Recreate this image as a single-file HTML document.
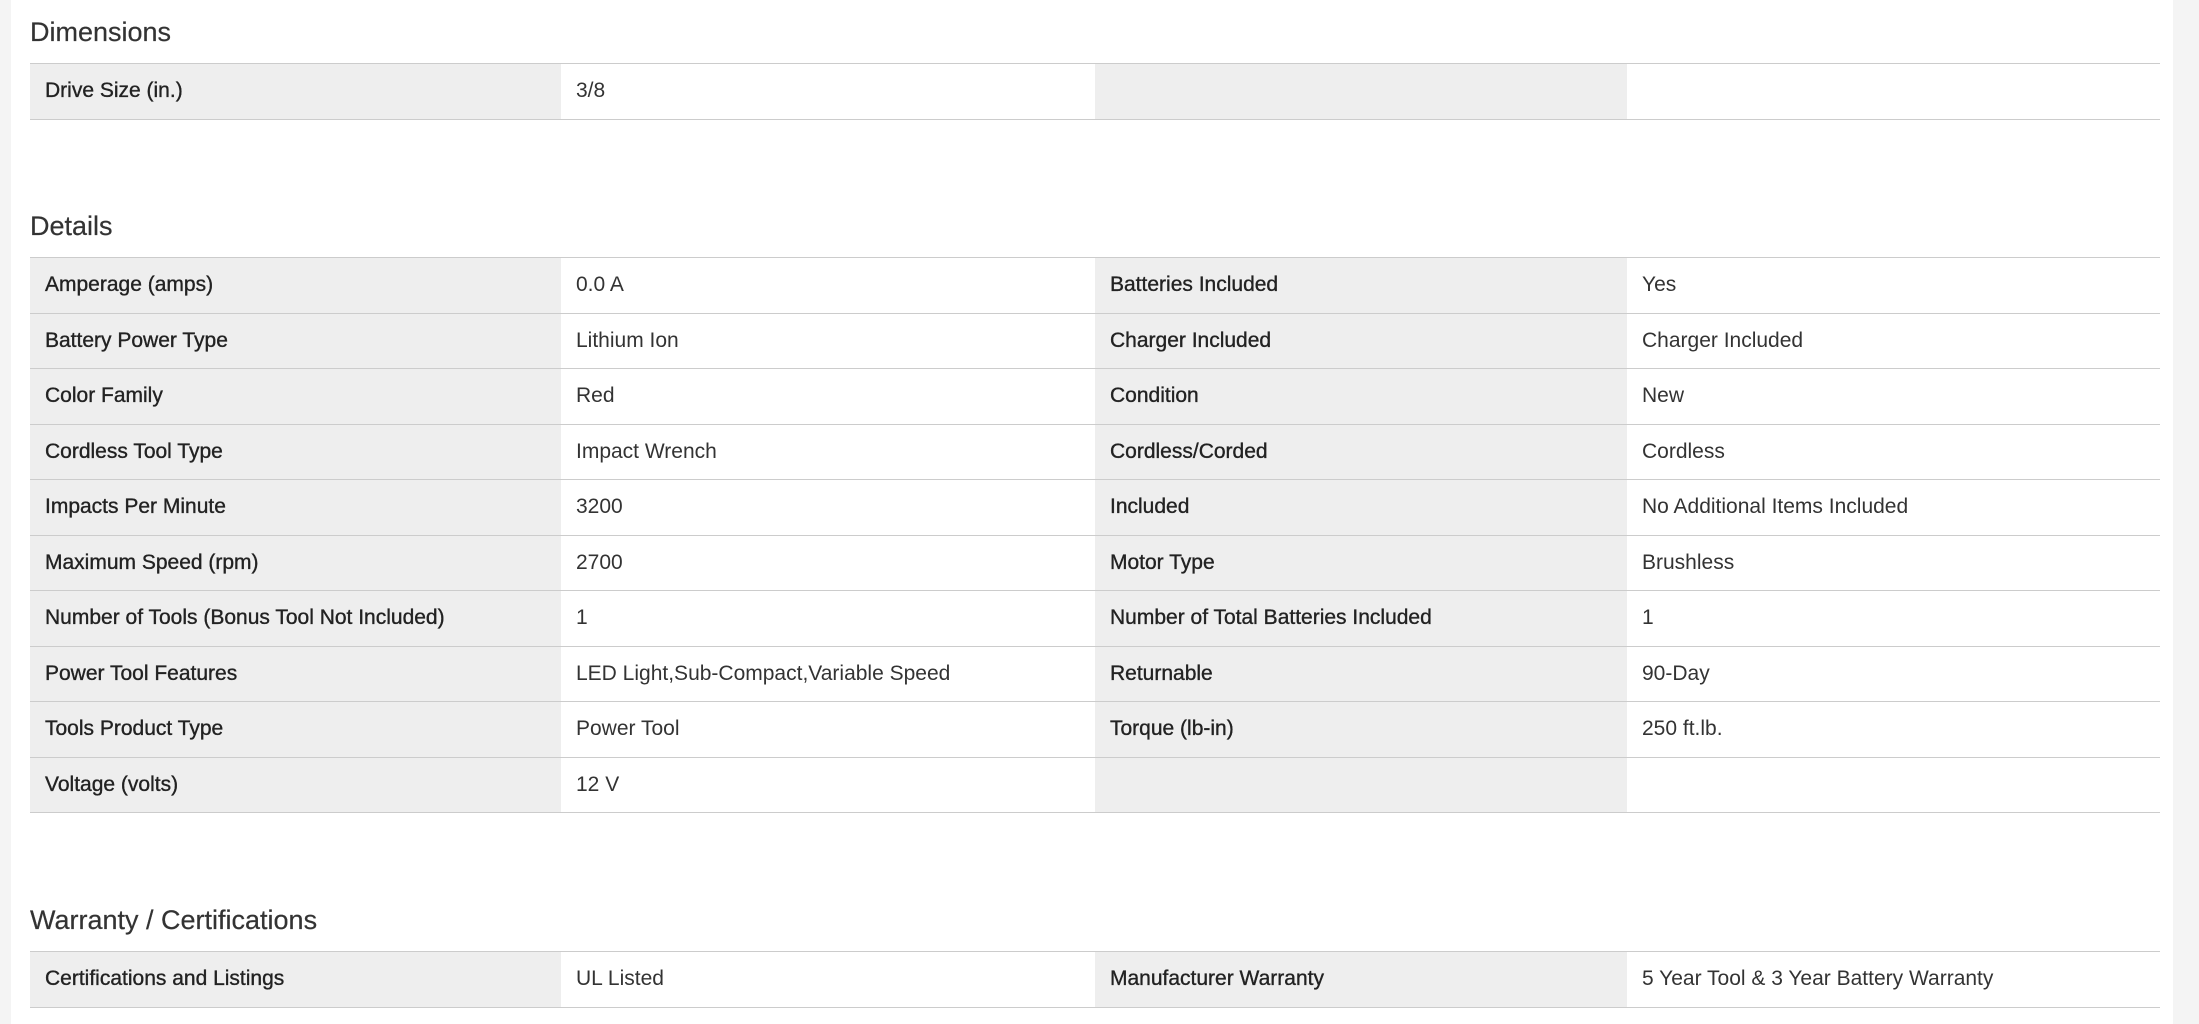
<!DOCTYPE html>
<html><head><meta charset="utf-8"><style>
html,body{margin:0;padding:0;background:#fff;width:2199px;height:1024px;overflow:hidden;font-family:"Liberation Sans",Arial,sans-serif;color:#333}
.lstrip{position:absolute;left:0;top:0;width:11px;height:1024px;background:#f4f4f4}
.rstrip{position:absolute;left:2173px;top:0;width:26px;height:1024px;background:#f4f4f4}
h2{position:absolute;left:30px;margin:0;font-size:27px;font-weight:normal;color:#333;line-height:30px;-webkit-text-stroke:0.2px #333}
table{position:absolute;left:30px;width:2130px;border-collapse:collapse;table-layout:fixed;border-top:1.5px solid #ccc}
td{height:54.5px;border-bottom:1.2px solid #ccc;font-size:21px;padding:0 0 0 15px;vertical-align:middle;white-space:nowrap}
td.k{background:#eee;color:#222;-webkit-text-stroke:0.35px #222}
td.v{background:#fff}
</style></head><body>
<div class="lstrip"></div><div class="rstrip"></div>

<h2 style="top:17px">Dimensions</h2>
<table style="top:63px"><colgroup><col style="width:531px"><col style="width:534px"><col style="width:532px"><col style="width:533px"></colgroup>
<tr><td class="k">Drive Size (in.)</td><td class="v">3/8</td><td class="k"></td><td class="v"></td></tr>
</table>

<h2 style="top:211px">Details</h2>
<table style="top:257px"><colgroup><col style="width:531px"><col style="width:534px"><col style="width:532px"><col style="width:533px"></colgroup>
<tr><td class="k">Amperage (amps)</td><td class="v">0.0 A</td><td class="k">Batteries Included</td><td class="v">Yes</td></tr>
<tr><td class="k">Battery Power Type</td><td class="v">Lithium Ion</td><td class="k">Charger Included</td><td class="v">Charger Included</td></tr>
<tr><td class="k">Color Family</td><td class="v">Red</td><td class="k">Condition</td><td class="v">New</td></tr>
<tr><td class="k">Cordless Tool Type</td><td class="v">Impact Wrench</td><td class="k">Cordless/Corded</td><td class="v">Cordless</td></tr>
<tr><td class="k">Impacts Per Minute</td><td class="v">3200</td><td class="k">Included</td><td class="v">No Additional Items Included</td></tr>
<tr><td class="k">Maximum Speed (rpm)</td><td class="v">2700</td><td class="k">Motor Type</td><td class="v">Brushless</td></tr>
<tr><td class="k">Number of Tools (Bonus Tool Not Included)</td><td class="v">1</td><td class="k">Number of Total Batteries Included</td><td class="v">1</td></tr>
<tr><td class="k">Power Tool Features</td><td class="v">LED Light,Sub-Compact,Variable Speed</td><td class="k">Returnable</td><td class="v">90-Day</td></tr>
<tr><td class="k">Tools Product Type</td><td class="v">Power Tool</td><td class="k">Torque (lb-in)</td><td class="v">250 ft.lb.</td></tr>
<tr><td class="k">Voltage (volts)</td><td class="v">12 V</td><td class="k"></td><td class="v"></td></tr>
</table>

<h2 style="top:905px">Warranty / Certifications</h2>
<table style="top:951px"><colgroup><col style="width:531px"><col style="width:534px"><col style="width:532px"><col style="width:533px"></colgroup>
<tr><td class="k">Certifications and Listings</td><td class="v">UL Listed</td><td class="k">Manufacturer Warranty</td><td class="v">5 Year Tool &amp; 3 Year Battery Warranty</td></tr>
</table>
</body></html>
